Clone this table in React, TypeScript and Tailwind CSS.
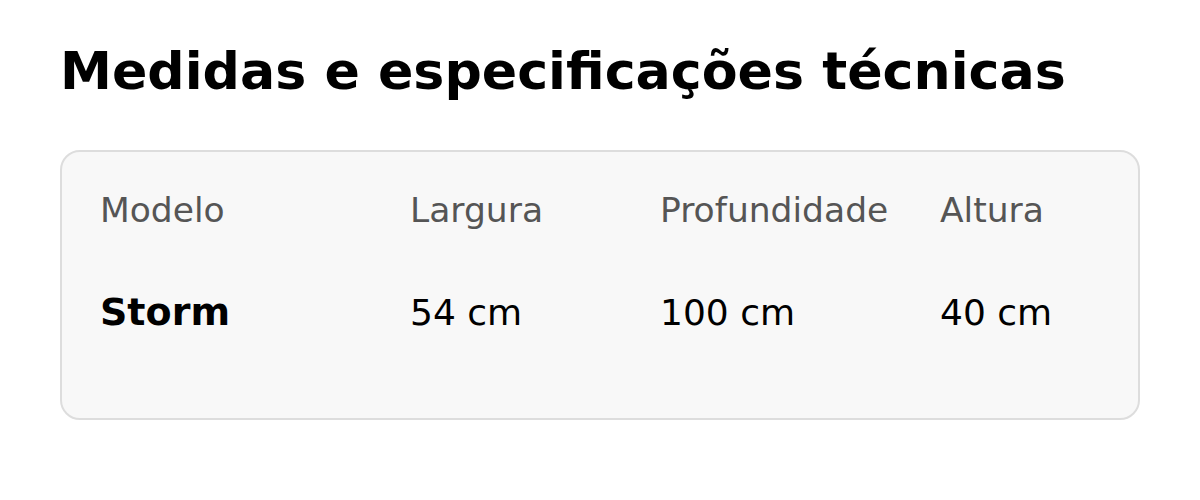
export default function App() {
  const specs = [
    { label: "Modelo", value: "Storm", strong: true },
    { label: "Largura", value: "54 cm" },
    { label: "Profundidade", value: "100 cm" },
    { label: "Altura", value: "40 cm" },
  ];

  return (
    <div className="min-h-screen bg-white px-[60px] pt-[41px] font-['DejaVu_Sans',sans-serif]">
      <h1 className="text-[52.2px] leading-[60px] font-bold text-black">
        Medidas e especificações técnicas
      </h1>

      <div className="mt-[49px] h-[270px] rounded-[20px] border-2 border-[#dddddd] bg-[#f8f8f8] pl-[38px] pt-[38px]">
        <div className="grid grid-cols-[310px_250px_280px_1fr] items-baseline">
          {specs.map((s) => (
            <div key={s.label} className="text-[34.5px] leading-[40px] text-[#555555]">
              {s.label}
            </div>
          ))}
          {specs.map((s) => (
            <div
              key={s.label + "-v"}
              className={`mt-[61px] leading-[42px] text-black ${
                s.strong ? "text-[38px] font-bold" : "text-[36px]"
              }`}
            >
              {s.value}
            </div>
          ))}
        </div>
      </div>
    </div>
  );
}
